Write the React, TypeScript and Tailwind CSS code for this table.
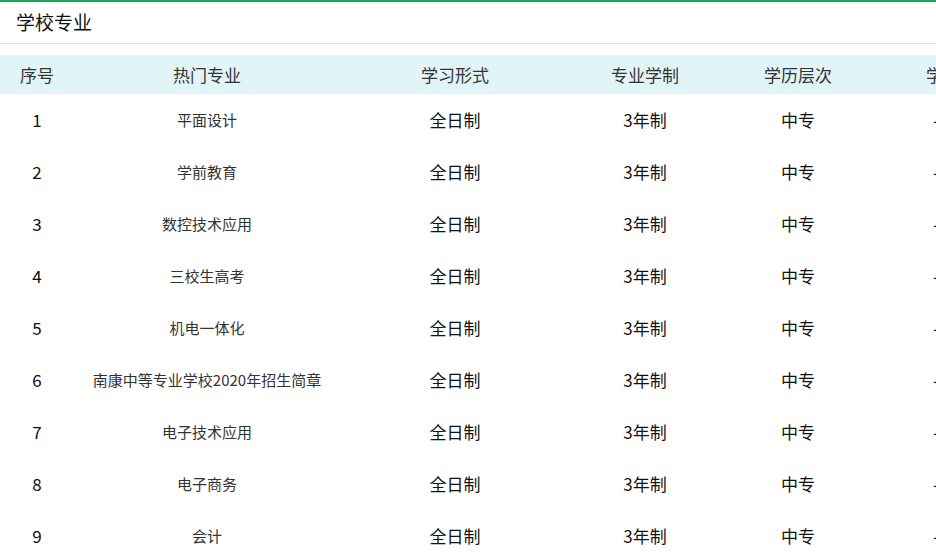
import React from 'react';

const majors = [
  '平面设计',
  '学前教育',
  '数控技术应用',
  '三校生高考',
  '机电一体化',
  '南康中等专业学校2020年招生简章',
  '电子技术应用',
  '电子商务',
  '会计',
];

const App: React.FC = () => {
  return (
    <div
      className="w-[936px] h-[557px] overflow-hidden bg-white"
      style={{ fontFamily: '"Noto Sans CJK SC", "Noto Sans", sans-serif' }}
    >
      <div className="border-t-2 border-[#1aa85c]">
        {/* 标题 */}
        <div className="h-[42px] flex items-center px-4 border-b border-[#dddddd]">
          <h3 className="text-[19px] text-[#111]">学校专业</h3>
        </div>

        {/* 专业表格 */}
        <table className="mt-[11px] w-[1010px] table-fixed border-collapse">
          <colgroup>
            <col className="w-[74px]" />
            <col className="w-[266px]" />
            <col className="w-[230px]" />
            <col className="w-[150px]" />
            <col className="w-[156px]" />
            <col className="w-[134px]" />
          </colgroup>
          <thead>
            <tr className="h-[39px] bg-[#e1f5f8] text-[17px] text-[#333]">
              <th className="font-normal">序号</th>
              <th className="font-normal">热门专业</th>
              <th className="font-normal">学习形式</th>
              <th className="font-normal">专业学制</th>
              <th className="font-normal">学历层次</th>
              <th className="font-normal">学费</th>
            </tr>
          </thead>
          <tbody>
            {majors.map((name, i) => (
              <tr key={name} className="h-[52px] text-center">
                <td className="text-[17px] text-[#111]">{i + 1}</td>
                <td className="text-[15px] text-[#333]">{name}</td>
                <td className="text-[17px] text-[#111]">全日制</td>
                <td className="text-[17px] text-[#111]">3年制</td>
                <td className="text-[17px] text-[#111]">中专</td>
                <td className="text-left pl-[57px] text-[17px] text-[#111]">-</td>
              </tr>
            ))}
          </tbody>
        </table>
      </div>
    </div>
  );
};

export default App;
